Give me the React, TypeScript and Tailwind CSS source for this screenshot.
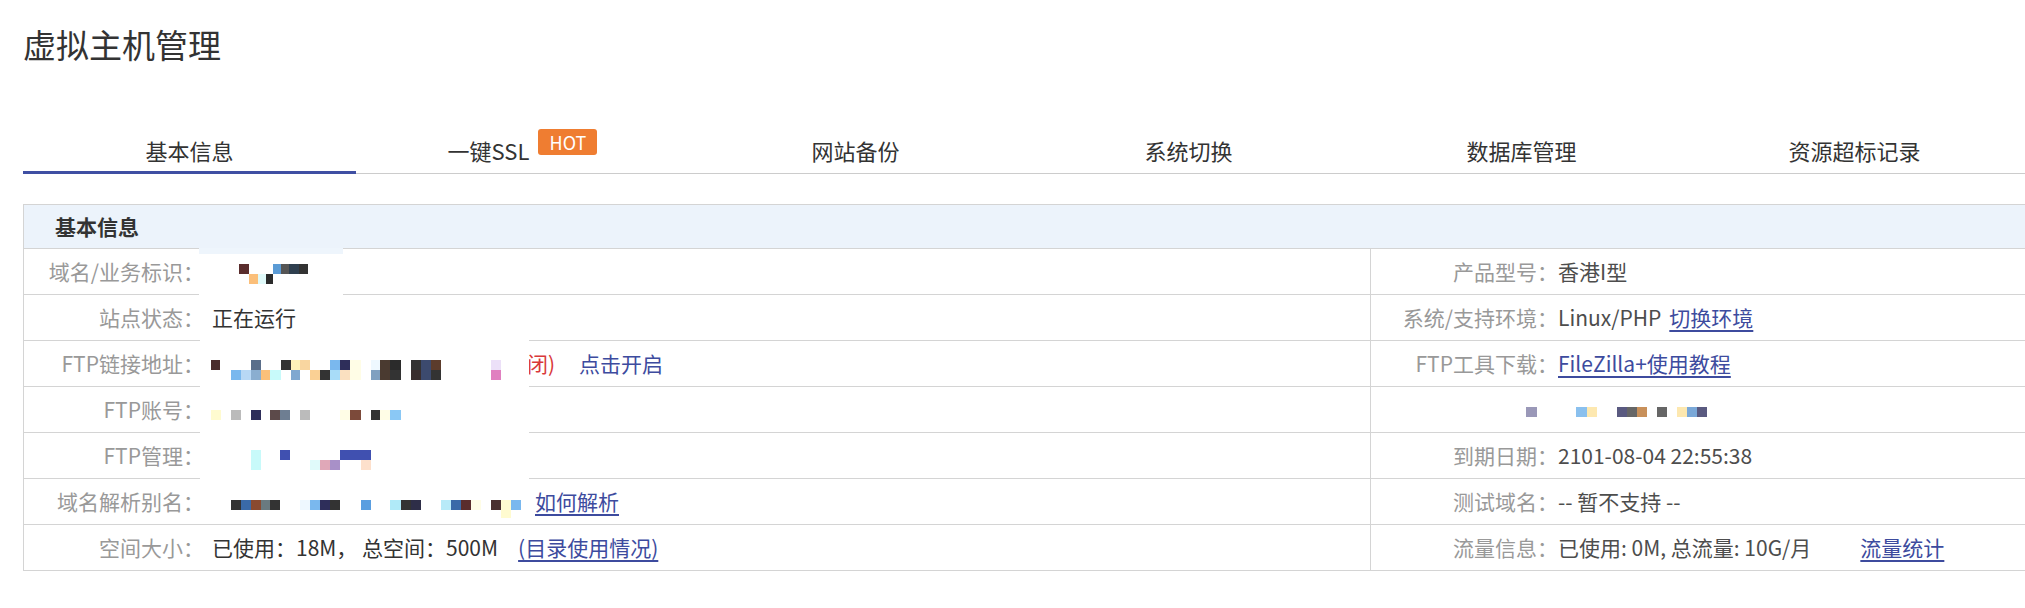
import React from "react";

type Sq = [number, number, number, number, string];

// redaction boxes that hide values (and the borders under them) in the screenshot
const whiteBoxes: Sq[] = [
  [199, 248, 144, 52, "#ffffff"],
  [199, 248, 144, 6, "#eef5fc"],
  [200, 334, 329, 148, "#ffffff"],
];

const mosaic: Sq[] = [
  // 域名/业务标识
  [239, 264, 10, 10, "#5a2d2d"],
  [249, 274, 9, 10, "#fbbf7a"],
  [258, 274, 8, 10, "#e0fafa"],
  [266, 274, 7, 10, "#2b2b2b"],
  [273, 264, 8, 10, "#5b9bd5"],
  [281, 264, 8, 10, "#555555"],
  [289, 264, 10, 10, "#2f3f4f"],
  [299, 264, 9, 10, "#333333"],
  // FTP链接地址
  [211, 360, 9, 10, "#4a2c2c"],
  [251, 360, 10, 10, "#5a6e8a"],
  [281, 360, 10, 10, "#333333"],
  [291, 360, 9, 10, "#fff3b8"],
  [300, 360, 10, 10, "#f9d6a0"],
  [330, 360, 10, 10, "#7ab8ee"],
  [340, 360, 10, 10, "#2e2e5a"],
  [350, 360, 11, 10, "#fffde6"],
  [371, 360, 9, 10, "#eef8ff"],
  [380, 360, 10, 10, "#4a3a30"],
  [390, 360, 11, 10, "#2b2b2b"],
  [411, 360, 10, 10, "#333333"],
  [421, 360, 10, 10, "#3c4a6e"],
  [431, 360, 10, 10, "#5c3c2c"],
  [491, 360, 10, 10, "#ece0f8"],
  [231, 370, 10, 10, "#7ab8ee"],
  [241, 370, 10, 10, "#b8d8f5"],
  [251, 370, 10, 10, "#8aaed0"],
  [261, 370, 9, 10, "#fbc07a"],
  [270, 370, 11, 10, "#c8fafa"],
  [291, 370, 9, 10, "#80a8d0"],
  [310, 370, 10, 10, "#fad094"],
  [320, 370, 10, 10, "#333333"],
  [330, 370, 10, 10, "#a8dcf8"],
  [340, 370, 10, 10, "#fae0c0"],
  [350, 370, 11, 10, "#fffde6"],
  [371, 370, 9, 10, "#80a0c0"],
  [380, 370, 10, 10, "#4a3a30"],
  [390, 370, 11, 10, "#333333"],
  [411, 370, 10, 10, "#3a2e2e"],
  [421, 370, 10, 10, "#3c4a6e"],
  [431, 370, 10, 10, "#333333"],
  [491, 370, 10, 10, "#e080c0"],
  // FTP账号
  [211, 410, 10, 10, "#fffbd0"],
  [231, 410, 10, 10, "#bbbbbb"],
  [251, 410, 10, 10, "#2e2e5a"],
  [270, 410, 10, 10, "#5c4a4a"],
  [280, 410, 10, 10, "#6e7e92"],
  [300, 410, 10, 10, "#bbbbbb"],
  [340, 410, 10, 10, "#fffde6"],
  [350, 410, 11, 10, "#7c4a3a"],
  [371, 410, 9, 10, "#333333"],
  [380, 410, 10, 10, "#fffde6"],
  [390, 410, 11, 10, "#8ac8f5"],
  // FTP管理
  [251, 450, 10, 20, "#c8fafa"],
  [280, 450, 10, 10, "#4050b0"],
  [310, 460, 10, 10, "#e0fafa"],
  [320, 460, 10, 10, "#e0a8b8"],
  [330, 460, 10, 10, "#a890c8"],
  [340, 450, 31, 10, "#4050b0"],
  [361, 460, 10, 10, "#fde0cc"],
  // 域名解析别名
  [231, 500, 10, 10, "#333333"],
  [241, 500, 10, 10, "#3a6aa8"],
  [251, 500, 10, 10, "#8a4a30"],
  [261, 500, 9, 10, "#6a7a80"],
  [270, 500, 10, 10, "#333333"],
  [300, 500, 10, 10, "#eef8ff"],
  [310, 500, 10, 10, "#7ab8ee"],
  [320, 500, 10, 10, "#2e2e5a"],
  [330, 500, 10, 10, "#333333"],
  [361, 500, 10, 10, "#5a9ee0"],
  [390, 500, 11, 10, "#b0eaf8"],
  [401, 500, 10, 10, "#333333"],
  [411, 500, 10, 10, "#2e2e48"],
  [441, 500, 10, 10, "#b8eaf8"],
  [451, 500, 10, 10, "#3a6aa8"],
  [461, 500, 10, 10, "#5a2d2d"],
  [471, 500, 10, 10, "#fffde6"],
  [491, 500, 10, 10, "#4a3030"],
  [501, 500, 10, 18, "#fffbd0"],
  [511, 500, 10, 10, "#7ab8ee"],
  // right column, unnamed row
  [1526, 407, 11, 10, "#9a98b8"],
  [1576, 407, 11, 10, "#8ac0ee"],
  [1587, 407, 10, 10, "#fde8b0"],
  [1617, 407, 10, 10, "#5a5a80"],
  [1627, 407, 10, 10, "#666666"],
  [1637, 407, 10, 10, "#c8905a"],
  [1657, 407, 10, 10, "#666666"],
  [1677, 407, 10, 10, "#fde8b0"],
  [1687, 407, 10, 10, "#7aa8d8"],
  [1697, 407, 10, 10, "#5a5a80"],
];

const tabs = ["基本信息", "一键SSL", "网站备份", "系统切换", "数据库管理", "资源超标记录"];

function Link({ children, className = "" }: { children: React.ReactNode; className?: string }) {
  return (
    <a href="#" className={`text-[#3d4b9e] underline decoration-[1.5px] underline-offset-[4px] ${className}`}>
      {children}
    </a>
  );
}

function Row({
  label,
  value,
  rLabel,
  rValue,
}: {
  label: string;
  value?: React.ReactNode;
  rLabel?: string;
  rValue?: React.ReactNode;
}) {
  return (
    <div className="flex h-[46px] items-center border-b border-[#d4d4d4] text-[21px]">
      <div className="w-[180px] text-right text-[#999]">{label}</div>
      <div className="flex h-full w-[1167px] items-center border-r border-[#d4d4d4] pl-[8px] text-[#333]">
        {value}
      </div>
      <div className="w-[187px] text-right text-[#999]">{rLabel}</div>
      <div className="flex flex-1 items-center text-[#4d4d4d]">{rValue}</div>
    </div>
  );
}

export default function App() {
  return (
    <div className="relative h-[608px] w-full overflow-hidden bg-white font-['Noto_Sans_CJK_SC','Liberation_Sans',sans-serif] text-[#333]">
      <div className="ml-[23px] w-[2010px]">
        <h1 className="pt-[22px] text-[33px] font-normal leading-[45px]">虚拟主机管理</h1>

        <nav className="mt-[61px] flex border-b border-[#cccccc]">
          {tabs.map((t, i) => (
            <div key={t} className="relative flex h-[45px] w-[333px] items-center justify-center text-[22px]">
              <span>{t}</span>
              {i === 1 && (
                <span className="relative -top-[9px] ml-[9px] h-[26px] w-[59px] rounded-[3px] bg-[#ef7d31] text-center text-[18px] leading-[26px] text-white">
                  HOT
                </span>
              )}
              {i === 0 && <span className="absolute -bottom-px left-0 h-[3px] w-full bg-[#3f4fa3]" />}
            </div>
          ))}
        </nav>

        <section className="mt-[30px] border-l border-t border-[#d4d4d4]">
          <div className="flex h-[44px] items-center border-b border-[#d4d4d4] bg-[#ecf3fb] pl-[31px] text-[21px] font-bold">
            基本信息
          </div>
          <Row label="域名/业务标识：" rLabel="产品型号：" rValue="香港I型" />
          <Row
            label="站点状态："
            value="正在运行"
            rLabel="系统/支持环境："
            rValue={
              <>
                <span>Linux/PHP</span>
                <Link className="ml-[8px]">切换环境</Link>
              </>
            }
          />
          <Row
            label="FTP链接地址："
            value={
              <>
                <span className="ml-[315px] text-[#d9383a]">闭)</span>
                <a href="#" className="ml-[24px] text-[#3d4b9e]">点击开启</a>
              </>
            }
            rLabel="FTP工具下载："
            rValue={<Link>FileZilla+使用教程</Link>}
          />
          <Row label="FTP账号：" />
          <Row label="FTP管理：" rLabel="到期日期：" rValue="2101-08-04 22:55:38" />
          <Row
            label="域名解析别名："
            value={<Link className="ml-[323px]">如何解析</Link>}
            rLabel="测试域名："
            rValue="-- 暂不支持 --"
          />
          <Row
            label="空间大小："
            value={
              <>
                <span>已使用：18M， 总空间：500M</span>
                <Link className="ml-[20px]">(目录使用情况)</Link>
              </>
            }
            rLabel="流量信息："
            rValue={
              <>
                <span>已使用: 0M, 总流量: 10G/月</span>
                <Link className="ml-[49px]">流量统计</Link>
              </>
            }
          />
        </section>
      </div>

      <svg className="pointer-events-none absolute left-0 top-0" width="2025" height="608" viewBox="0 0 2025 608">
        {whiteBoxes.map(([x, y, w, h, c], i) => (
          <rect key={`w${i}`} x={x} y={y} width={w} height={h} fill={c} />
        ))}
        {mosaic.map(([x, y, w, h, c], i) => (
          <rect key={`m${i}`} x={x} y={y} width={w} height={h} fill={c} />
        ))}
      </svg>
    </div>
  );
}
